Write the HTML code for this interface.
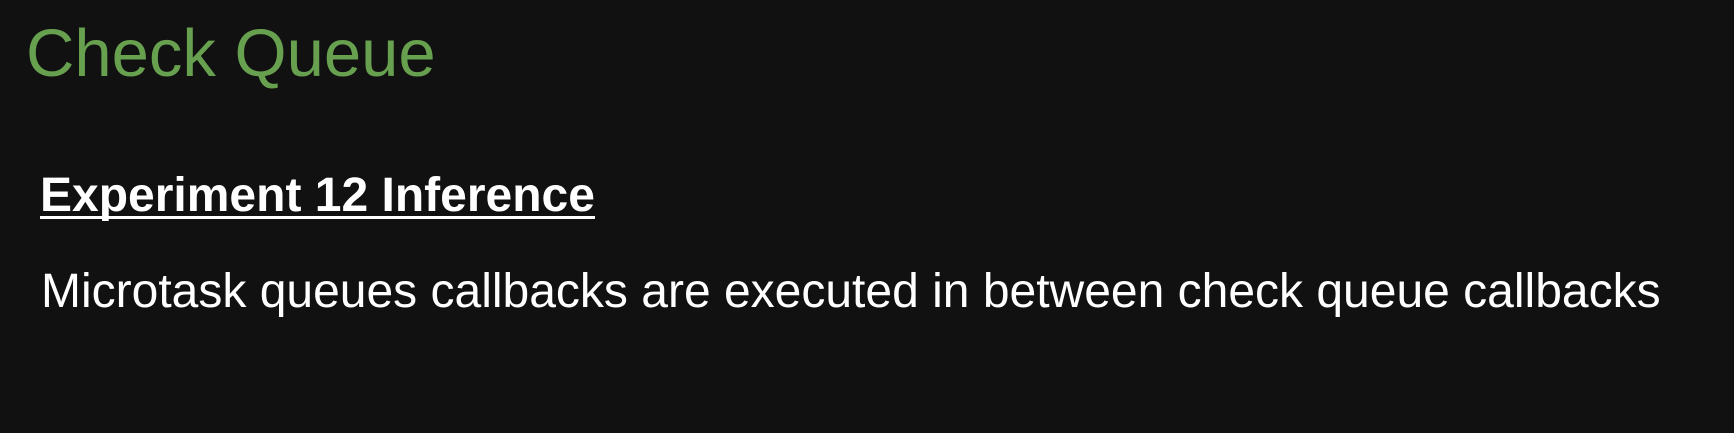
<!DOCTYPE html>
<html><head><meta charset="utf-8"><style>
html,body{margin:0;padding:0;}
body{width:1734px;height:433px;background:#111111;position:relative;overflow:hidden;font-family:"Liberation Sans",Arial,sans-serif;}
div{position:absolute;white-space:nowrap;line-height:1;}
#t{left:26px;top:20px;font-size:67px;color:#67a04e;}
#h{left:40px;top:172px;font-size:48px;font-weight:bold;color:#fff;}
#u{left:40px;top:216px;width:555px;height:3px;background:#fff;}
#b{left:41px;top:268px;font-size:48px;color:#fff;}
</style></head><body>
<div id="t">Check Queue</div>
<div id="h">Experiment 12 Inference</div>
<div id="u"></div>
<div id="b">Microtask queues callbacks are executed in between check queue callbacks</div>
</body></html>
